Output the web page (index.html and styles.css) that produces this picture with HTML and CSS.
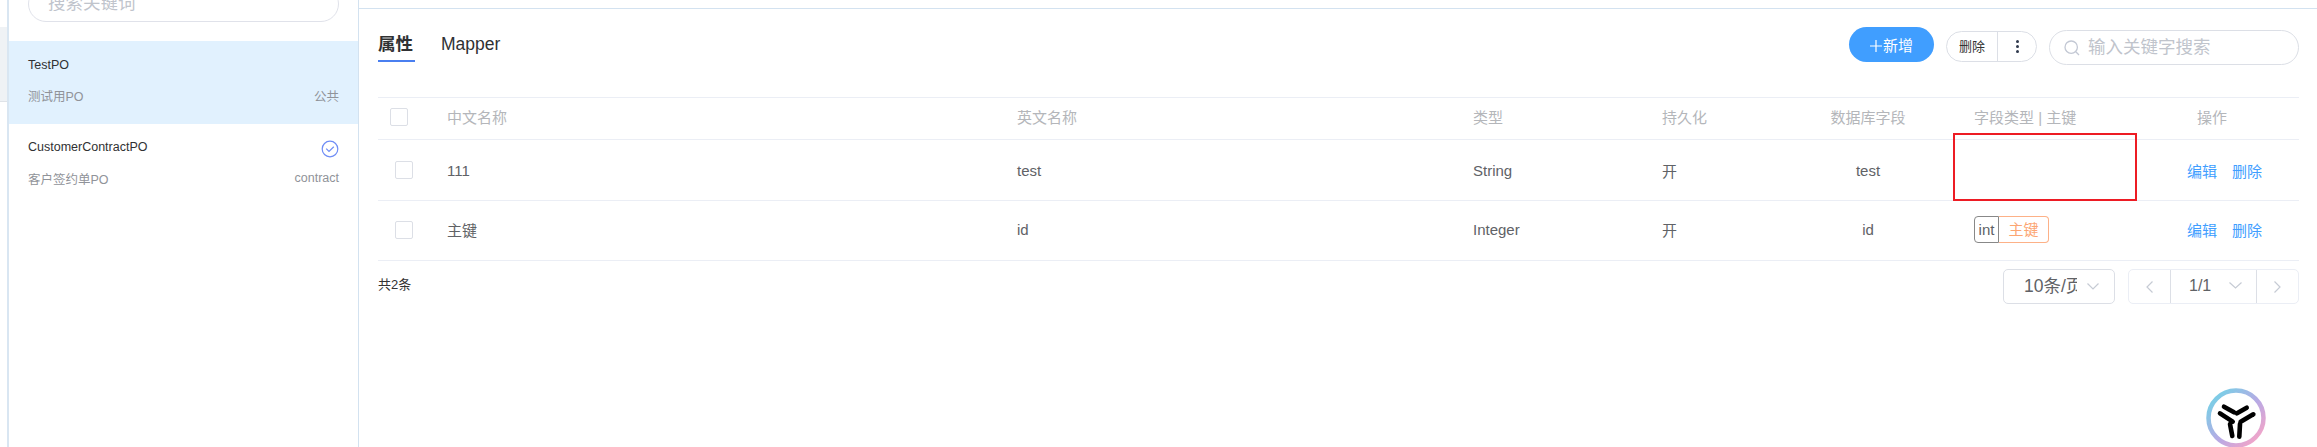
FILE: index.html
```html
<!DOCTYPE html>
<html lang="zh-CN">
    <head>
        <title>PO</title>
        <link rel="stylesheet" href="styles.css">
    </head>
    <body>
        <div class="strip">
            <div class="strip-patch"></div>
        </div>

        <aside class="sidebar">
            <div class="side-search">
                <div class="side-search-box">搜索关键词</div>
            </div>
            <div class="po-item po-item-active">
                <div class="po-row">
                    <span class="po-name">TestPO</span>
                </div>
                <div class="po-row po-row-sub">
                    <span>测试用PO</span>
                    <span>公共</span>
                </div>
            </div>
            <div class="po-item">
                <div class="po-row">
                    <span class="po-name">CustomerContractPO</span>
                    <svg class="po-check" width="18" height="18" viewBox="0 0 18 18">
                        <circle cx="9" cy="9" r="7.8" fill="none" stroke="#6f8df5" stroke-width="1.2"/>
                        <path d="M5.2 8.6 L8 11.4 L12.8 6.8" fill="none" stroke="#6f8df5" stroke-width="1.2"/>
                    </svg>
                </div>
                <div class="po-row po-row-sub">
                    <span>客户签约单PO</span>
                    <span>contract</span>
                </div>
            </div>
        </aside>

        <main class="content">
            <div class="toolbar">
                <div class="tabs">
                    <div class="tab tab-active">属性</div>
                    <div class="tab">Mapper</div>
                </div>
                <div class="actions">
                    <button class="btn-add">
                        <svg class="btn-plus" width="12" height="12" viewBox="0 0 12 12">
                            <path d="M0 6 H12 M6 0 V12" stroke="#fff" stroke-width="1.2"/>
                        </svg>新增
                    </button>
                    <div class="btn-group">
                        <span class="btn-del">删除</span>
                        <span class="btn-more">
                            <i></i><i></i><i></i>
                        </span>
                    </div>
                    <div class="table-search">
                        <svg width="16" height="16" viewBox="0 0 16 16">
                            <circle cx="7.2" cy="7.2" r="6.2" fill="none" stroke="#c3c8d4" stroke-width="1.3"/>
                            <path d="M11.8 11.8 L15 15" stroke="#c3c8d4" stroke-width="1.3"/>
                        </svg>
                        <span class="table-search-text">输入关键字搜索</span>
                    </div>
                </div>
            </div>

            <table class="fields">
                <colgroup>
                    <col class="col-check">
                    <col class="col-name">
                    <col class="col-en">
                    <col class="col-type">
                    <col class="col-persist">
                    <col class="col-db">
                    <col class="col-key">
                    <col class="col-op">
                </colgroup>
                <thead>
                    <tr>
                        <th><span class="checkbox checkbox-head"></span></th>
                        <th>中文名称</th>
                        <th>英文名称</th>
                        <th>类型</th>
                        <th>持久化</th>
                        <th class="center">数据库字段</th>
                        <th>字段类型 | 主键</th>
                        <th class="center">操作</th>
                    </tr>
                </thead>
                <tbody>
                    <tr>
                        <td><span class="checkbox"></span></td>
                        <td>111</td>
                        <td>test</td>
                        <td>String</td>
                        <td>开</td>
                        <td class="center">test</td>
                        <td></td>
                        <td class="ops"><a>编辑</a><a>删除</a></td>
                    </tr>
                    <tr>
                        <td><span class="checkbox"></span></td>
                        <td>主键</td>
                        <td>id</td>
                        <td>Integer</td>
                        <td>开</td>
                        <td class="center">id</td>
                        <td class="key-cell"><span class="tag tag-int">int</span><span class="tag tag-key">主键</span></td>
                        <td class="ops"><a>编辑</a><a>删除</a></td>
                    </tr>
                </tbody>
            </table>

            <div class="footer">
                <span class="total">共2条</span>
                <div class="pager">
                    <div class="page-size">
                        <span class="page-size-text">10条/页</span>
                        <svg width="12" height="7" viewBox="0 0 12 7"><path d="M.5 .5 L6 6 L11.5 .5" fill="none" stroke="#c6cbd4" stroke-width="1.2"/></svg>
                    </div>
                    <div class="page-nav">
                        <span class="page-arrow">
                            <svg width="7" height="12" viewBox="0 0 7 12"><path d="M6.5 .5 L1 6 L6.5 11.5" fill="none" stroke="#c6cbd4" stroke-width="1.2"/></svg>
                        </span>
                        <span class="page-num">1/1
                            <svg width="13" height="7" viewBox="0 0 13 7"><path d="M.5 .5 L6.5 6 L12.5 .5" fill="none" stroke="#c6cbd4" stroke-width="1.2"/></svg>
                        </span>
                        <span class="page-arrow">
                            <svg width="7" height="12" viewBox="0 0 7 12"><path d="M.5 .5 L6 6 L.5 11.5" fill="none" stroke="#c6cbd4" stroke-width="1.2"/></svg>
                        </span>
                    </div>
                </div>
            </div>

            <!-- red box drawn over the key column -->
            <div class="red-box"></div>

            <svg class="logo" width="60" height="60" viewBox="0 0 60 60">
                <defs>
                    <linearGradient id="ring" x1="0" y1="0" x2="1" y2="1">
                        <stop offset="0.15" stop-color="#7fcbe6"/>
                        <stop offset="0.55" stop-color="#b9a9e4"/>
                        <stop offset="0.9" stop-color="#f2a5c9"/>
                    </linearGradient>
                </defs>
                <circle cx="30" cy="30" r="27.5" fill="#fff" stroke="url(#ring)" stroke-width="4.5"/>
                <g stroke="#000" stroke-width="4.6" stroke-linecap="round" fill="none">
                    <path d="M18 18.7 L28 24.3"/>
                    <path d="M31 25.3 L40.7 19.7"/>
                    <path d="M14 25.3 L26.7 33.7"/>
                    <path d="M34.7 33.7 L47.3 26.3"/>
                    <path d="M24 36 L26.3 48"/>
                    <path d="M34 36 L33.3 48.7"/>
                </g>
            </svg>
        </main>
    </body>
</html>
```

FILE: styles.css
```css
* {
    box-sizing: border-box;
}

html, body {
    height: 100%;
}

body {
    margin: 0;
    display: flex;
    overflow: hidden;
    background: #fff;
    color: #333;
    font-family: "Liberation Sans", "Noto Sans CJK SC", sans-serif;
}

/* Left edge */
.strip {
    width: 9px;
    flex: none;
    padding-top: 27px;
    border-right: 2px solid #d9e6f2;
}

.strip-patch {
    height: 75px;
    background: #eff2f5;
    border-bottom: 1px solid #dfe3e8;
}

/* Sidebar */
.sidebar {
    width: 350px;
    flex: none;
    border-right: 1px solid #d3e2f0;
}

.side-search {
    height: 41px;
    padding: 0 19px;
    overflow: hidden;
    display: flex;
    flex-direction: column;
}

.side-search-box {
    height: 36px;
    flex: none;
    margin-top: -14px;
    padding: 0 19px;
    line-height: 32px;
    border: 1px solid #e0e2ea;
    border-radius: 18px;
    font-size: 17.5px;
    color: #c0c4cc;
}

.po-item {
    height: 83px;
    padding: 0 19px;
}

.po-item-active {
    background: #e1f1fe;
}

.po-row {
    height: 46px;
    display: flex;
    justify-content: space-between;
    align-items: center;
    font-size: 12.5px;
}

.po-name {
    color: #303133;
}

.po-item-active .po-name {
    padding-top: 1px;
}

.po-row-sub {
    height: 16px;
    color: #909399;
}

.po-check {
    margin-top: 4px;
}

/* Main */
.content {
    flex: 1;
    position: relative;
    margin-top: 8px;
    padding: 0 18px 0 19px;
    border-top: 1px solid #d3e2f0;
}

.toolbar {
    height: 88px;
    display: flex;
    justify-content: space-between;
}

.tabs {
    display: flex;
    gap: 26px;
    padding-top: 23px;
}

.tab {
    height: 30px;
    font-size: 17.5px;
    line-height: 24px;
    color: #303133;
}

.tab-active {
    width: 37px;
    font-weight: bold;
    border-bottom: 2px solid #4a7ff0;
}

.actions {
    display: flex;
    align-items: flex-start;
    padding-top: 18px;
    gap: 12px;
}

.btn-add {
    width: 85px;
    height: 35px;
    padding: 0;
    border: 0;
    border-radius: 18px;
    background: #409eff;
    color: #fff;
    font-family: inherit;
    font-size: 15px;
}

.btn-plus {
    margin-right: 1px;
    vertical-align: -1px;
}

.btn-group {
    width: 91px;
    height: 31px;
    margin-top: 4px;
    display: flex;
    align-items: center;
    border: 1px solid #dcdfe6;
    border-radius: 16px;
}

.btn-del {
    width: 51px;
    text-align: center;
    line-height: 29px;
    font-size: 13px;
    border-right: 1px solid #dcdfe6;
}

.btn-more {
    flex: 1;
    display: flex;
    flex-direction: column;
    align-items: center;
    gap: 2px;
}

.btn-more i {
    width: 3px;
    height: 3px;
    border-radius: 50%;
    background: #303a4d;
}

.table-search {
    width: 250px;
    height: 35px;
    margin-top: 3px;
    padding-left: 14px;
    display: flex;
    align-items: center;
    gap: 8px;
    border: 1px solid #dcdfe6;
    border-radius: 18px;
    font-size: 17.5px;
    color: #c0c4cc;
}

.table-search-text {
    padding-bottom: 5px;
}

/* Table */
.fields {
    width: 1921px;
    table-layout: fixed;
    border-collapse: collapse;
    border-top: 1px solid #ebeef5;
    font-size: 15px;
}

.col-check { width: 59px; }
.col-name { width: 570px; }
.col-en { width: 456px; }
.col-type { width: 189px; }
.col-persist { width: 150px; }
.col-db { width: 132px; }
.col-key { width: 191px; }
.col-op { width: 174px; }

.fields th,
.fields td {
    padding: 0 0 0 10px;
    text-align: left;
    border-bottom: 1px solid #ebeef5;
}

.fields th {
    height: 42px;
    padding-bottom: 5px;
    font-weight: normal;
    color: #b4b6ba;
}

.fields th:first-child {
    padding-bottom: 3px;
}

.fields td {
    height: 61px;
    color: #606266;
}

.fields tbody tr:last-child td {
    height: 60px;
    padding-bottom: 2px;
}

.fields th.center,
.fields td.center {
    padding-left: 0;
    text-align: center;
}

.fields th:nth-child(7),
.fields td:nth-child(7) {
    padding-left: 40px;
}

.fields td.ops {
    padding-left: 62px;
}

.ops a {
    margin-right: 15px;
    color: #409eff;
}

.checkbox {
    display: block;
    width: 18px;
    height: 18px;
    margin-left: 7px;
    border: 1px solid #dcdfe6;
    border-radius: 2px;
}

.checkbox-head {
    margin-left: 2px;
}

.key-cell {
    font-size: 0;
}

.tag {
    display: inline-block;
    height: 27px;
    line-height: 25px;
    font-size: 15px;
    text-align: center;
    vertical-align: middle;
}

.tag-int {
    width: 25px;
    border: 1px solid #888;
    border-radius: 4px 0 0 4px;
    color: #606266;
}

.tag-key {
    width: 50px;
    border: 1px solid #fdb187;
    border-left: 0;
    border-radius: 0 4px 4px 0;
    color: #fca673;
}

/* Footer */
.footer {
    padding-top: 8px;
    display: flex;
    justify-content: space-between;
}

.total {
    font-size: 13px;
    line-height: 32px;
}

.pager {
    display: flex;
    gap: 13px;
}

.page-size {
    width: 112px;
    height: 35px;
    padding: 0 15px 0 20px;
    display: flex;
    align-items: center;
    justify-content: space-between;
    border: 1px solid #dcdfe6;
    border-radius: 5px;
    font-size: 17.5px;
    color: #606266;
}

.page-size-text {
    width: 53px;
    padding-bottom: 4px;
    white-space: nowrap;
    overflow: hidden;
}

.page-nav {
    width: 171px;
    height: 35px;
    display: flex;
    border: 1px solid #ebeef5;
    border-radius: 5px;
}

.page-arrow {
    width: 41px;
    display: flex;
    align-items: center;
    justify-content: center;
}

.page-num {
    flex: 1;
    display: flex;
    align-items: center;
    justify-content: space-between;
    padding: 0 14px 2px 18px;
    border-left: 1px solid #dcdfe6;
    border-right: 1px solid #dcdfe6;
    font-size: 16px;
    color: #606266;
}

/* Overlays */
.red-box {
    position: absolute;
    left: 1594px;
    top: 124px;
    width: 184px;
    height: 68px;
    border: 2px solid #ed1c24;
}

.logo {
    position: absolute;
    left: 1847px;
    top: 379px;
}
```
